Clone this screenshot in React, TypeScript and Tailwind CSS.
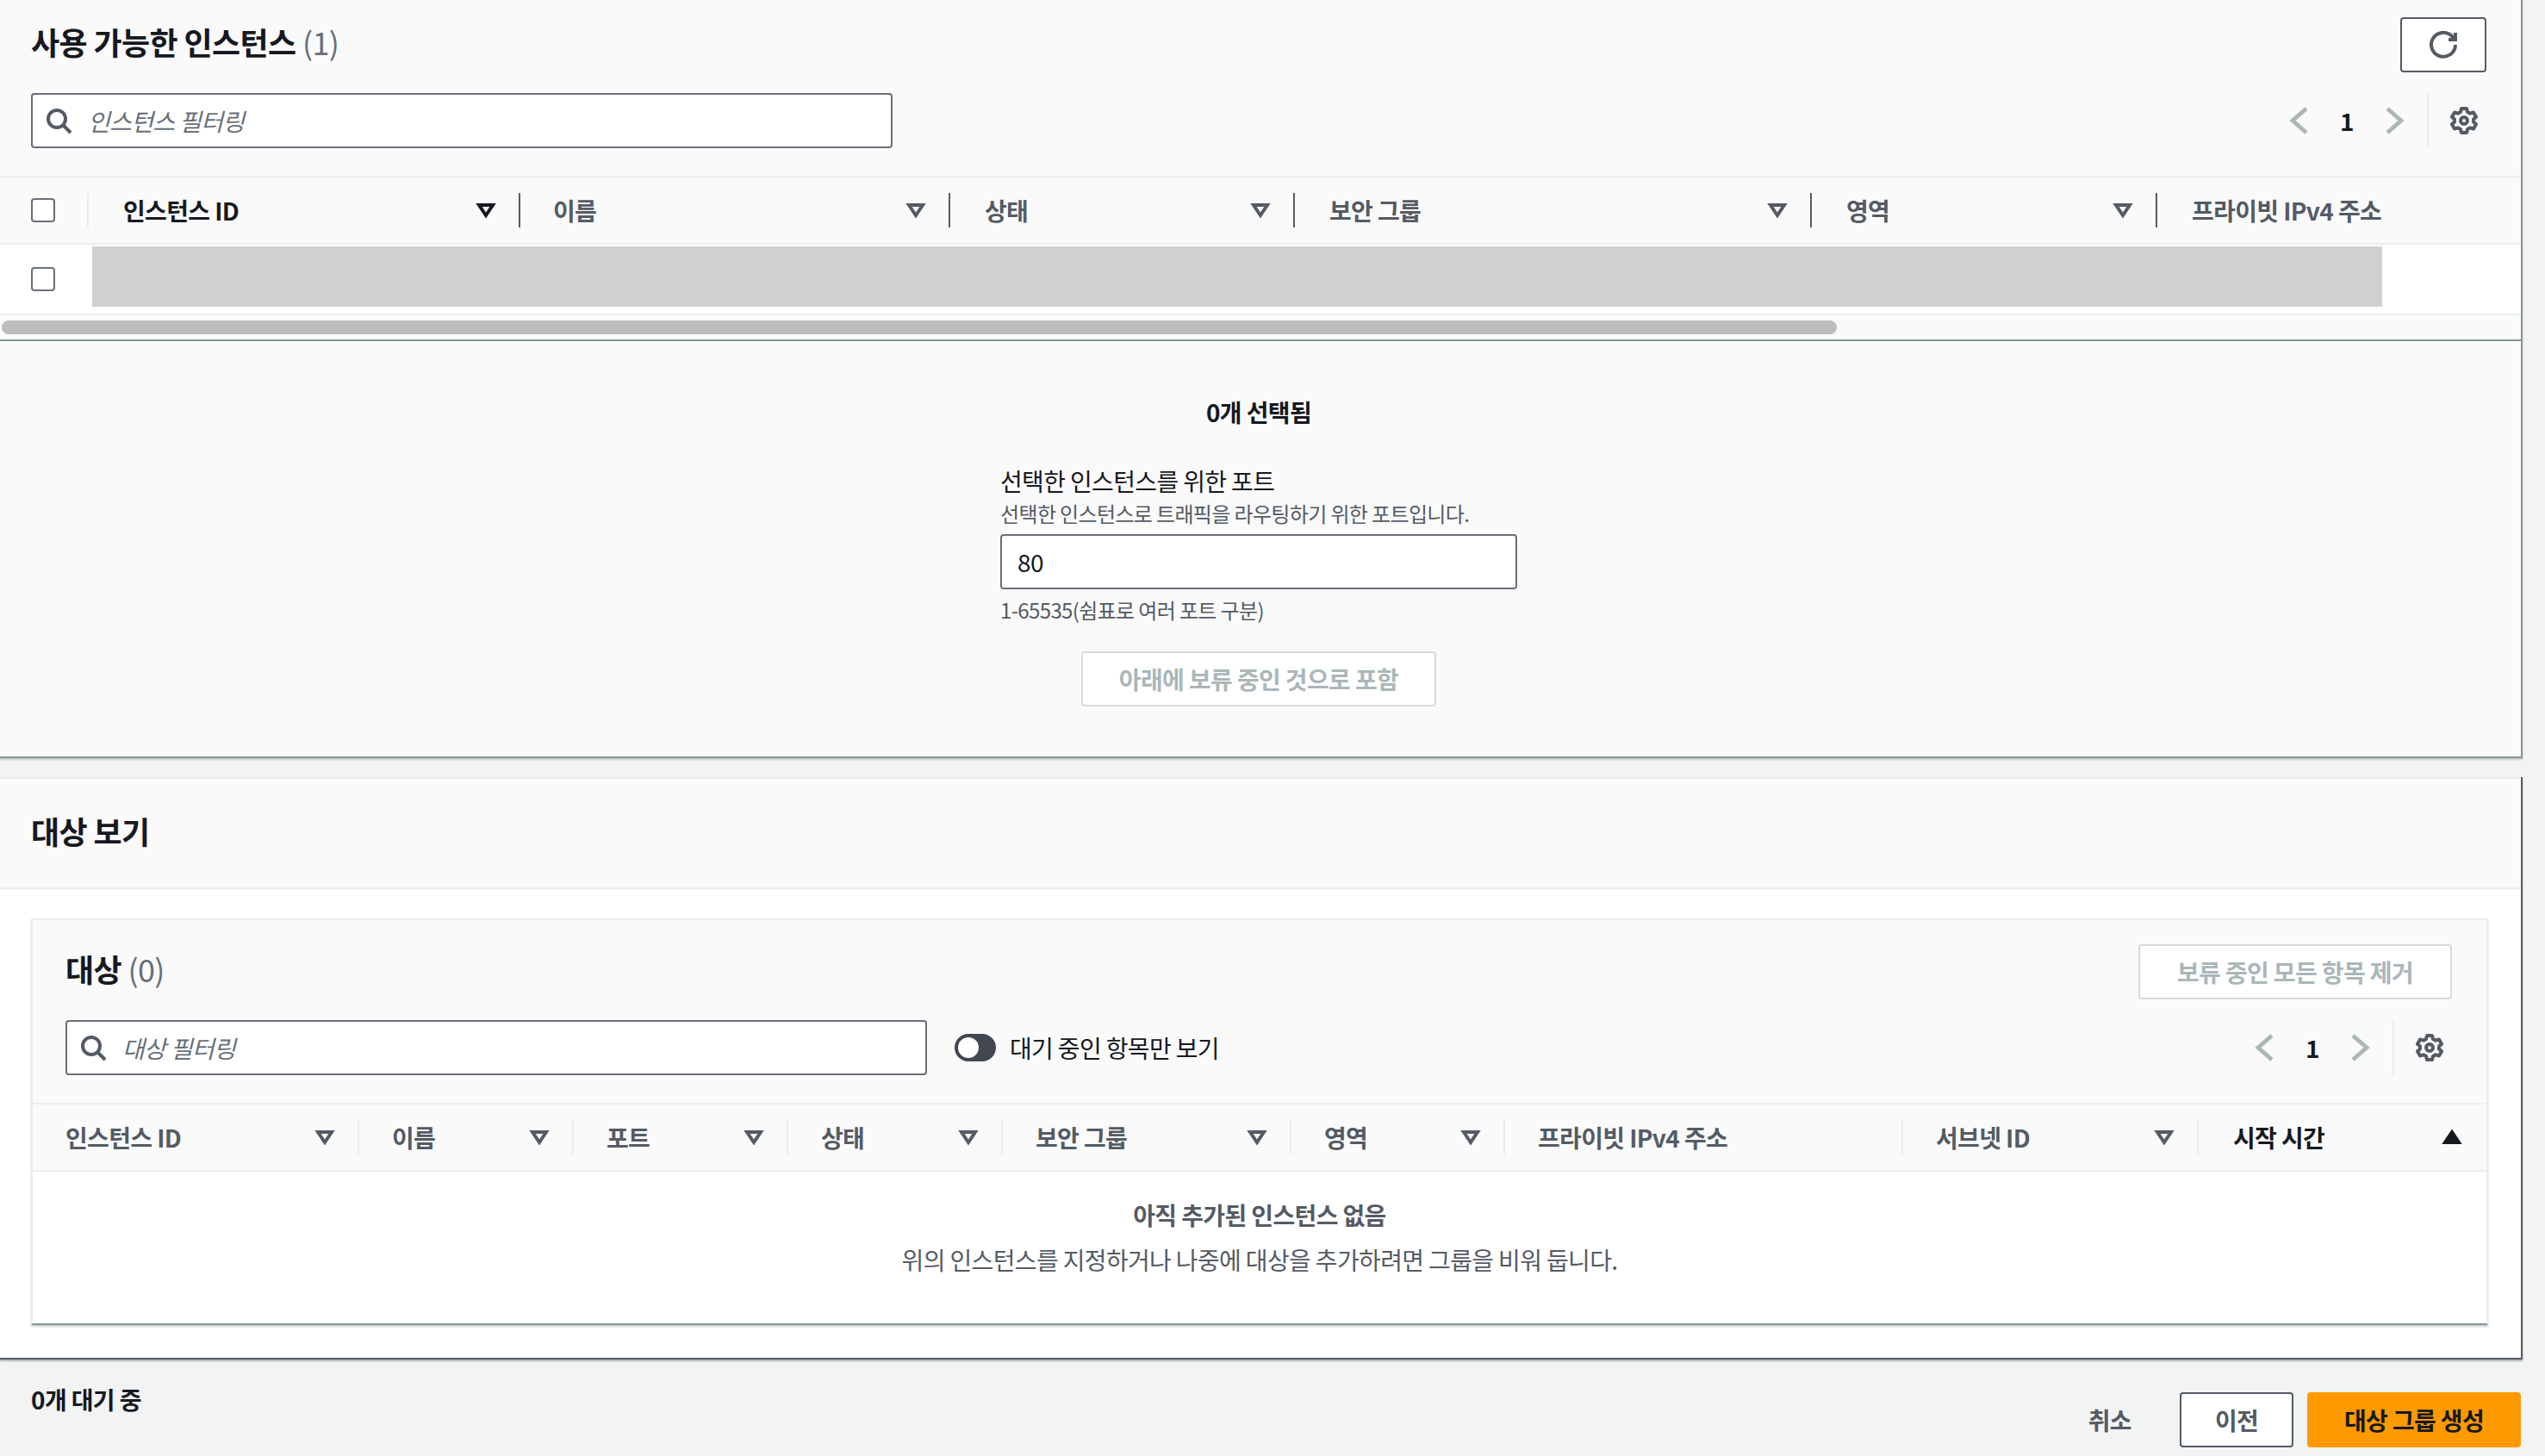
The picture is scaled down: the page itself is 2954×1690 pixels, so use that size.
import React from 'react'

const Search = () => (
    <svg width="32" height="32" viewBox="0 0 16 16" fill="none" stroke="#545b64" strokeWidth="2" className="shrink-0">
        <circle cx="7" cy="7" r="5" />
        <path d="M15 15l-4.5-4.5" />
    </svg>
)

const Angle = (props: { right?: boolean }) => (
    <svg width="32" height="32" viewBox="0 0 16 16" fill="none" stroke="#aab7b8" strokeWidth="2.4" className="shrink-0">
        <path d={props.right ? 'M4 1l8 7-8 7' : 'M12 1L4 8l8 7'} />
    </svg>
)

const Gear = () => (
    <svg width="32" height="32" viewBox="0 0 32 32" fill="none" stroke="#545b64" strokeWidth="4" strokeLinejoin="round" className="shrink-0">
        <path d="M13 2h6l1 4 3 1.700 4-1.200 3 5.200-3 2.800v3l3 2.800-3 5.200-4-1.200-3 1.700-1 4h-6l-1-4-3-1.700-4 1.200-3-5.200 3-2.800v-3l-3-2.800 3-5.200 4 1.200 3-1.700z" />
        <circle cx="16" cy="16" r="4" />
    </svg>
)

const Refresh = () => (
    <svg width="32" height="32" viewBox="0 0 16 16" fill="none" stroke="#545b64" strokeWidth="2">
        <path d="M15 8a7 7 0 1 1-2-5l2 2" />
        <path d="M15 1v4h-4" />
    </svg>
)

const Caret = (props: { dark?: boolean }) => (
    <svg width="32" height="32" viewBox="0 0 16 16" fill="none" stroke={props.dark ? '#16191f' : '#545b64'} strokeWidth="2" className="shrink-0">
        <path d="M4 5h8l-4 6z" />
    </svg>
)

const CaretUp = () => (
    <svg width="32" height="32" viewBox="0 0 16 16" fill="#16191f" stroke="#16191f" strokeWidth="2" className="shrink-0">
        <path d="M4 11h8L8 5z" />
    </svg>
)

const Checkbox = () => <div className="w-[28px] h-[28px] bg-white border-2 border-[#687078] rounded-[4px]" />

const Pagination = () => (
    <div className="flex items-center h-[64px] mr-[10px]">
        <Angle />
        <span className="w-[78px] text-center text-[28px] font-bold text-[#16191f]">1</span>
        <Angle right />
        <div className="w-[2px] h-[64px] bg-[#eaeded] ml-[22px] mr-[25px]" />
        <Gear />
    </div>
)

const FilterInput = (props: { text: string, width: string }) => (
    <div className={`flex items-center h-[64px] bg-white border-2 border-[#687078] rounded-[4px] pl-[14px] ${props.width}`}>
        <Search />
        <span className="ml-[18px] text-[28px] italic text-[#687078]">{props.text}</span>
    </div>
)

const Th = (props: { label: string, width: string, pad?: string, dark?: boolean, line?: string, noCaret?: boolean }) => (
    <div className={`flex items-center justify-between h-[40px] shrink-0 box-border border-r-2 ${props.line ?? 'border-[#eaeded]'} ${props.width} ${props.pad ?? 'pl-[38px]'} pr-[22px]`}>
        <span className={`text-[28px] font-bold whitespace-nowrap ${props.dark ? 'text-[#16191f]' : 'text-[#545b64]'}`}>{props.label}</span>
        {!props.noCaret && <Caret dark={props.dark} />}
    </div>
)

const AvailableInstances = () => (
    <section className="w-[2928px] bg-[#fafafa] border-r-2 border-b-2 border-[#879596] shadow-[0_2px_2px_rgba(0,28,36,0.2)]">
        <div className="flex justify-between h-[204px] pl-[36px] pr-[40px]">
            <div className="flex flex-col">
                <h2 className="h-[108px] pt-[24px] text-[36px] leading-[48px] font-bold text-[#16191f]">
                    사용 가능한 인스턴스 <span className="font-normal text-[#687078]">(1)</span>
                </h2>
                <FilterInput text="인스턴스 필터링" width="w-[1000px]" />
            </div>
            <div className="flex flex-col items-end pt-[20px]">
                <button className="flex items-center justify-center w-[100px] h-[64px] mb-[24px] bg-white border-2 border-[#545b64] rounded-[4px]">
                    <Refresh />
                </button>
                <Pagination />
            </div>
        </div>
        <div className="flex items-center h-[80px] border-y-2 border-[#eaeded]">
            <div className="flex items-center h-[40px] w-[103px] shrink-0 box-border pl-[36px] border-r-2 border-[#eaeded]">
                <Checkbox />
            </div>
            <Th label="인스턴스 ID" width="w-[501px]" pad="pl-[40px]" dark line="border-[#545b64]" />
            <Th label="이름" width="w-[499px]" line="border-[#545b64]" />
            <Th label="상태" width="w-[400px]" pad="pl-[40px]" line="border-[#545b64]" />
            <Th label="보안 그룹" width="w-[600px]" pad="pl-[40px]" line="border-[#545b64]" />
            <Th label="영역" width="w-[401px]" pad="pl-[40px]" line="border-[#545b64]" />
            <span className="pl-[40px] text-[28px] font-bold text-[#545b64] whitespace-nowrap">프라이빗 IPv4 주소</span>
        </div>
        <div className="flex h-[82px] bg-white border-b-2 border-[#eaeded]">
            <div className="flex items-center w-[107px] pl-[36px] shrink-0">
                <Checkbox />
            </div>
            <div className="w-[2658px] h-[70px] mt-[2px] bg-[#d0d0d0]" />
        </div>
        <div className="flex items-center h-[28px] pl-[2px]">
            <div className="w-[2130px] h-[16px] rounded-full bg-[#bdbdbd]" />
        </div>
    </section>
)

const PortForm = () => (
    <section className="w-[2928px] h-[484px] pr-[4px] bg-[#fafafa] border-r-2 border-b-2 border-[#879596] shadow-[0_2px_2px_rgba(0,28,36,0.2)] flex flex-col items-center">
        <div className="mt-[64px] text-[28px] leading-[36px] font-bold text-[#16191f]">0개 선택됨</div>
        <div className="w-[600px] mt-[42px]">
            <div className="text-[28px] leading-[40px] text-[#16191f]">선택한 인스턴스를 위한 포트</div>
            <div className="mt-[2px] text-[24px] leading-[32px] text-[#545b64]">선택한 인스턴스로 트래픽을 라우팅하기 위한 포트입니다.</div>
            <div className="flex items-center h-[64px] mt-[8px] pl-[18px] bg-white border-2 border-[#687078] rounded-[4px] text-[28px] text-[#16191f]">80</div>
            <div className="mt-[8px] text-[24px] leading-[32px] text-[#545b64]">1-65535(쉼표로 여러 포트 구분)</div>
        </div>
        <button className="w-[412px] h-[64px] mt-[32px] bg-white border-2 border-[#d5dbdb] rounded-[4px] text-[28px] font-bold text-[#aab7b8]">
            아래에 보류 중인 것으로 포함
        </button>
    </section>
)

const Targets = () => (
    <section className="w-[2928px] h-[676px] mt-[22px] bg-white border-r-2 border-b-2 border-[#545b64] shadow-[0_2px_2px_rgba(0,28,36,0.3)]">
        <div className="flex items-center h-[130px] pl-[36px] pb-[6px] bg-[#fafafa] border-y-2 border-[#eaeded]">
            <h2 className="text-[36px] font-bold text-[#16191f]">대상 보기</h2>
        </div>
        <div className="w-[2852px] h-[472px] ml-[36px] mt-[34px] bg-white border-x-2 border-t-2 border-x-[#eaeded] border-t-[#eaeded] border-b-2 border-b-[#879596] shadow-[0_2px_2px_rgba(0,28,36,0.2)]">
            <div className="flex justify-between h-[212px] bg-[#fafafa] pl-[38px] pr-[40px]">
                <div className="flex flex-col">
                    <h3 className="h-[116px] pt-[32px] text-[36px] leading-[48px] font-bold text-[#16191f]">
                        대상 <span className="font-normal text-[#687078]">(0)</span>
                    </h3>
                    <div className="flex items-center">
                        <FilterInput text="대상 필터링" width="w-[1000px]" />
                        <div className="relative w-[48px] h-[32px] ml-[32px] rounded-full bg-[#414750]">
                            <div className="absolute left-[4px] top-[4px] w-[24px] h-[24px] rounded-full bg-white" />
                        </div>
                        <span className="ml-[16px] text-[28px] text-[#16191f]">대기 중인 항목만 보기</span>
                    </div>
                </div>
                <div className="flex flex-col items-end pt-[28px]">
                    <button className="w-[364px] h-[64px] mb-[24px] bg-white border-2 border-[#d5dbdb] rounded-[4px] text-[28px] font-bold text-[#aab7b8]">
                        보류 중인 모든 항목 제거
                    </button>
                    <Pagination />
                </div>
            </div>
            <div className="flex items-center h-[80px] bg-[#fafafa] border-y-2 border-[#eaeded]">
                <Th label="인스턴스 ID" width="w-[379px]" />
                <Th label="이름" width="w-[249px]" />
                <Th label="포트" width="w-[249px]" />
                <Th label="상태" width="w-[249px]" />
                <Th label="보안 그룹" width="w-[335px]" />
                <Th label="영역" width="w-[248px]" />
                <Th label="프라이빗 IPv4 주소" width="w-[462px]" noCaret />
                <Th label="서브넷 ID" width="w-[343px]" />
                <div className="flex items-center justify-between flex-1 pl-[40px] pr-[24px]">
                    <span className="text-[28px] font-bold text-[#16191f]">시작 시간</span>
                    <CaretUp />
                </div>
            </div>
            <div className="flex flex-col items-center pt-[30px]">
                <div className="text-[28px] leading-[40px] font-bold text-[#545b64]">아직 추가된 인스턴스 없음</div>
                <div className="mt-[12px] text-[28px] leading-[40px] text-[#545b64]">위의 인스턴스를 지정하거나 나중에 대상을 추가하려면 그룹을 비워 둡니다.</div>
            </div>
        </div>
    </section>
)

const Footer = () => (
    <footer className="flex justify-between flex-1 pl-[36px] pr-[28px]">
        <div className="pt-[26px] text-[28px] leading-[40px] font-bold text-[#16191f]">0개 대기 중</div>
        <div className="flex items-start gap-[16px] pt-[38px]">
            <button className="h-[64px] px-[40px] text-[28px] font-bold text-[#545b64]">취소</button>
            <button className="w-[132px] h-[64px] bg-white border-2 border-[#545b64] rounded-[4px] text-[28px] font-bold text-[#545b64]">이전</button>
            <button className="w-[248px] h-[64px] bg-[#ff9900] rounded-[4px] text-[28px] font-bold text-[#16191f]">대상 그룹 생성</button>
        </div>
    </footer>
)

export default function App() {
    return (
        <div className="flex flex-col w-[2954px] h-[1690px] overflow-hidden bg-[#f2f3f3] tracking-[-0.04em] font-['Noto_Sans_CJK_KR','Noto_Sans',sans-serif]">
            <AvailableInstances />
            <PortForm />
            <Targets />
            <Footer />
        </div>
    )
}
